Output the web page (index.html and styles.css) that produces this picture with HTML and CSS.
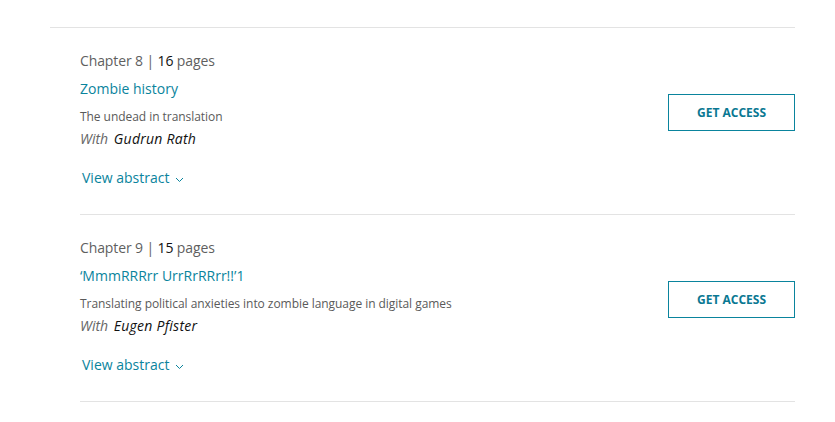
FILE: index.html
```html
<!DOCTYPE html>
<html>
<head>
<meta charset="utf-8">
<link rel="stylesheet" href="styles.css">
</head>
<body>
<div class="toc">
  <div class="chapter">
    <div class="info">
      <div class="meta">Chapter 8 | <span class="num">16</span> pages</div>
      <a class="title">Zombie history</a>
      <div class="subtitle">The undead in translation</div>
      <div class="author"><span class="with">With</span> <span class="name">Gudrun Rath</span></div>
      <a class="abstract">View abstract <svg class="chev" width="9" height="6" viewBox="0 0 9 6"><path d="M1 1l3.5 3.5L8 1" fill="none" stroke="currentColor" stroke-width="1"/></svg></a>
    </div>
    <button class="access">GET ACCESS</button>
  </div>
  <div class="chapter">
    <div class="info">
      <div class="meta">Chapter 9 | <span class="num">15</span> pages</div>
      <a class="title">‘MmmRRRrr UrrRrRRrr!!’1</a>
      <div class="subtitle">Translating political anxieties into zombie language in digital games</div>
      <div class="author"><span class="with">With</span> <span class="name">Eugen Pfister</span></div>
      <a class="abstract">View abstract <svg class="chev" width="9" height="6" viewBox="0 0 9 6"><path d="M1 1l3.5 3.5L8 1" fill="none" stroke="currentColor" stroke-width="1"/></svg></a>
    </div>
    <button class="access">GET ACCESS</button>
  </div>
</div>
</body>
</html>
```
FILE: styles.css
```css
html, body {
  margin: 0;
  padding: 0;
  background: #fff;
}
body {
  font-family: "Open Sans", "Liberation Sans", sans-serif;
  color: #5a5a5a;
}
.toc {
  margin: 27px 0 0 50px;
  width: 745px;
  border-top: 1px solid #e3e3e3;
}
.chapter {
  margin-left: 30px;
  display: flex;
  justify-content: space-between;
  align-items: flex-start;
  padding: 23px 0 26px;
  border-bottom: 1px solid #e3e3e3;
}
.info {
  display: flex;
  flex-direction: column;
  align-items: flex-start;
}
.meta {
  font-size: 14px;
  line-height: 20px;
  color: #5f5f5f;
  letter-spacing: -0.12px;
}
.num {
  color: #111;
}
.title {
  margin-top: 8px;
  font-size: 14px;
  line-height: 20px;
  color: #0a849d;
}
.subtitle {
  margin-top: 9px;
  font-size: 12px;
  line-height: 18px;
  color: #5a5a5a;
  letter-spacing: -0.05px;
}
.author {
  margin-top: 3px;
  font-size: 14px;
  line-height: 20px;
  font-style: italic;
}
.with {
  color: #666;
}
.name {
  color: #111;
  margin-left: 2px;
  letter-spacing: 0.25px;
}
.abstract {
  margin-top: 19px;
  margin-left: 2px;
  font-size: 14px;
  line-height: 20px;
  color: #0a849d;
  display: flex;
  align-items: center;
}
.chev {
  margin-left: 6px;
  margin-top: 3px;
}
.access {
  margin-top: 43px;
  width: 127px;
  height: 37px;
  border: 1px solid #0a849d;
  background: #fff;
  color: #0a7892;
  font-family: "Open Sans", "Liberation Sans", sans-serif;
  font-weight: 700;
  font-size: 12px;
  padding: 0;
  cursor: pointer;
}
```
